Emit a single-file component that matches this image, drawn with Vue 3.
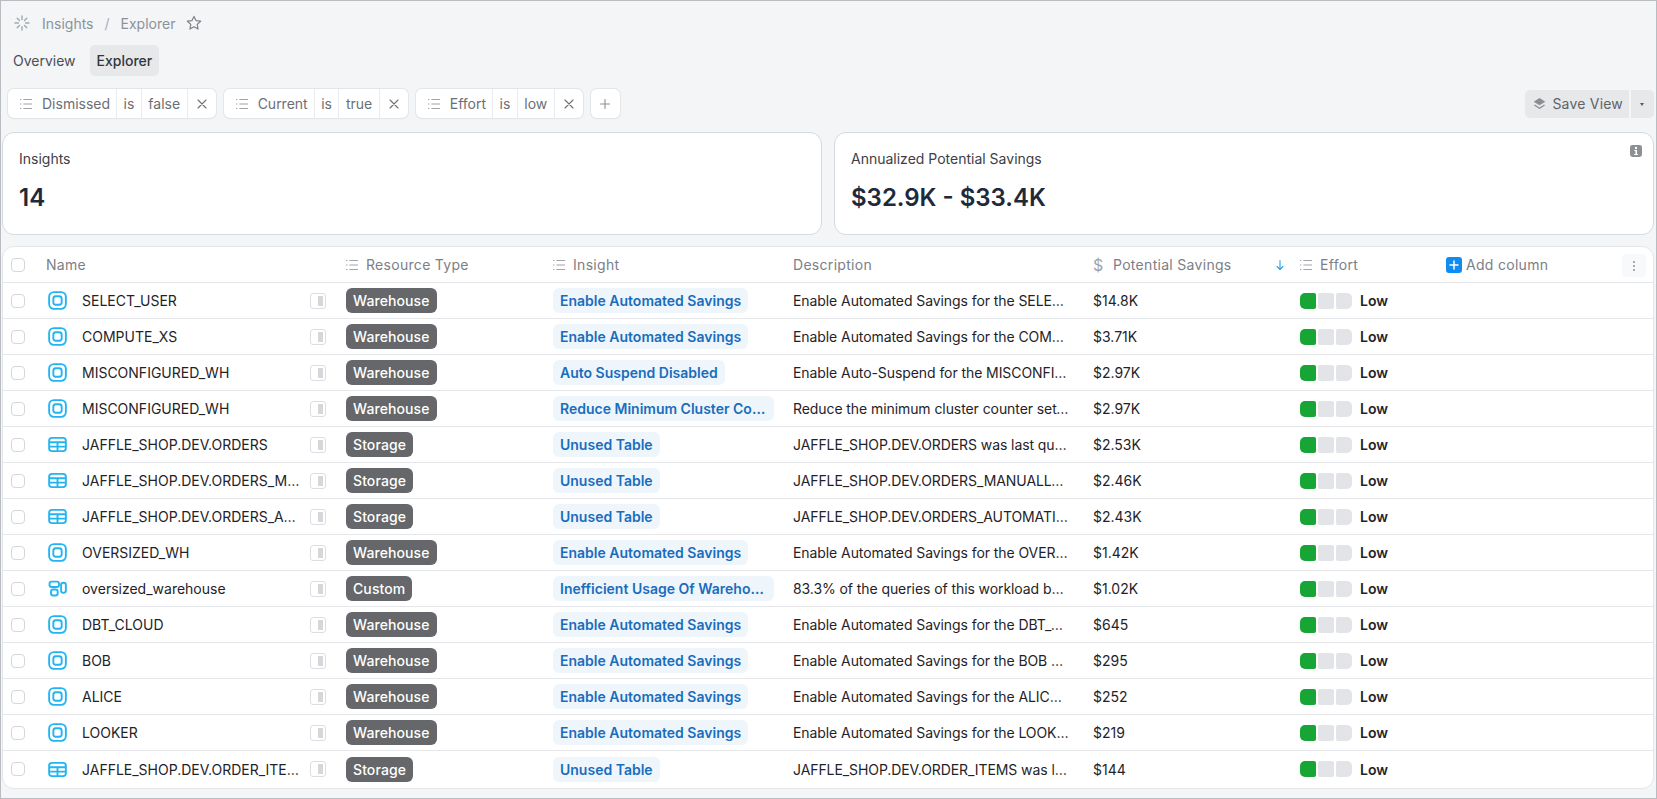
<script setup>
const filters = [
  { field: 'Dismissed', value: 'false' },
  { field: 'Current', value: 'true' },
  { field: 'Effort', value: 'low' },
]
const W = 'Warehouse'
const S = 'Storage'
const E = 'Enable Automated Savings'
const U = 'Unused Table'
const rows = [
  ['wh', 'SELECT_USER', W, E, 'Enable Automated Savings for the SELECT_USER warehouse', '$14.8K'],
  ['wh', 'COMPUTE_XS', W, E, 'Enable Automated Savings for the COMPUTE_XS warehouse', '$3.71K'],
  ['wh', 'MISCONFIGURED_WH', W, 'Auto Suspend Disabled', 'Enable Auto-Suspend for the MISCONFIGURED_WH warehouse', '$2.97K'],
  ['wh', 'MISCONFIGURED_WH', W, 'Reduce Minimum Cluster Count', 'Reduce the minimum cluster counter setting for this warehouse', '$2.97K'],
  ['tb', 'JAFFLE_SHOP.DEV.ORDERS', S, U, 'JAFFLE_SHOP.DEV.ORDERS was last queried long ago', '$2.53K'],
  ['tb', 'JAFFLE_SHOP.DEV.ORDERS_MANUALLY', S, U, 'JAFFLE_SHOP.DEV.ORDERS_MANUALLY was last queried long ago', '$2.46K'],
  ['tb', 'JAFFLE_SHOP.DEV.ORDERS_AUTOMATIC', S, U, 'JAFFLE_SHOP.DEV.ORDERS_AUTOMATIC was last queried', '$2.43K'],
  ['wh', 'OVERSIZED_WH', W, E, 'Enable Automated Savings for the OVERSIZED_WH warehouse', '$1.42K'],
  ['cu', 'oversized_warehouse', 'Custom', 'Inefficient Usage Of Warehouse Size', '83.3% of the queries of this workload benefit little', '$1.02K'],
  ['wh', 'DBT_CLOUD', W, E, 'Enable Automated Savings for the DBT_CLOUD warehouse', '$645'],
  ['wh', 'BOB', W, E, 'Enable Automated Savings for the BOB warehouse now', '$295'],
  ['wh', 'ALICE', W, E, 'Enable Automated Savings for the ALICE warehouse', '$252'],
  ['wh', 'LOOKER', W, E, 'Enable Automated Savings for the LOOKER warehouse', '$219'],
  ['tb', 'JAFFLE_SHOP.DEV.ORDER_ITEMS', S, U, 'JAFFLE_SHOP.DEV.ORDER_ITEMS was last queried long ago', '$144'],
].map(([icon, name, type, insight, description, savings]) => ({ icon, name, type, insight, description, savings }))
</script>

<template>
  <div class="page">
    <div class="crumbs">
      <svg class="spin" viewBox="0 0 16 16" fill="none" stroke="#a3a8af" stroke-width="1.4" stroke-linecap="round">
        <path d="M8 1v3.4M8 11.6V15M1 8h3.4M11.6 8H15M3.2 3.2l2.3 2.3M10.5 10.5l2.3 2.3M3.2 12.8l2.3-2.3M10.5 5.5l2.3-2.3" />
      </svg>
      <span>Insights</span>
      <span class="slash">/</span>
      <span>Explorer</span>
      <svg class="star" viewBox="0 0 16 16" fill="none" stroke="#7d8288" stroke-width="1.2" stroke-linejoin="round">
        <path d="M8 1.4l2 4.2 4.6.6-3.4 3.2.9 4.6L8 11.7 3.9 14l.9-4.6-3.4-3.2 4.6-.6z" />
      </svg>
    </div>
    <div class="tabs">
      <span class="tab">Overview</span>
      <span class="tab active">Explorer</span>
    </div>
    <div class="toolbar">
      <div v-for="f in filters" :key="f.field" class="filter">
        <span class="seg field">
          <svg class="list" viewBox="0 0 14 14" fill="none" stroke="#a0a5ab" stroke-width="1.1">
            <path d="M1 2.5h1.4M1 7h1.4M1 11.5h1.4M4.4 2.5H13M4.4 7H13M4.4 11.5H13" />
          </svg>
          {{ f.field }}
        </span>
        <span class="seg">is</span>
        <span class="seg">{{ f.value }}</span>
        <span class="seg close">
          <svg viewBox="0 0 10 10" fill="none" stroke="#6c7076" stroke-width="1.1" stroke-linecap="round"><path d="M1 1l8 8M9 1l-8 8" /></svg>
        </span>
      </div>
      <button class="add-filter">
        <svg viewBox="0 0 10 10" fill="none" stroke="#8b9096" stroke-width="1.1" stroke-linecap="round"><path d="M5 .5v9M.5 5h9" /></svg>
      </button>
      <div class="save">
        <span class="save-main">
          <svg viewBox="0 0 14 14"><path d="M7 1L13.2 5 7 9 .8 5z" fill="#8a8d91" /><path d="M1.5 8.6L7 12.2l5.5-3.6" fill="none" stroke="#8a8d91" stroke-width="1.4" /></svg>
          Save View
        </span>
        <span class="save-caret"></span>
      </div>
    </div>
    <div class="cards">
      <div class="card first">
        <div class="card-label">Insights</div>
        <div class="card-value">14</div>
      </div>
      <div class="card">
        <div class="card-label">Annualized Potential Savings</div>
        <div class="card-value">$32.9K - $33.4K</div>
        <svg class="info" viewBox="0 0 12 12">
          <rect width="12" height="12" rx="2.4" fill="#8c8f93" />
          <circle cx="6" cy="3" r="1.2" fill="#fff" />
          <path d="M4.3 5.1H7v4h1v1H4.2V9h1.2V6.1H4.3z" fill="#fff" />
        </svg>
      </div>
    </div>
    <div class="table">
      <div class="row head">
        <div class="cell center"><span class="check"></span></div>
        <div class="cell name-head">Name</div>
        <div class="cell type-head">
          <svg class="list" viewBox="0 0 14 14" fill="none" stroke="#a0a5ab" stroke-width="1.1"><path d="M1 2.5h1.4M1 7h1.4M1 11.5h1.4M4.4 2.5H13M4.4 7H13M4.4 11.5H13" /></svg>
          Resource Type
        </div>
        <div class="cell type-head">
          <svg class="list" viewBox="0 0 14 14" fill="none" stroke="#a0a5ab" stroke-width="1.1"><path d="M1 2.5h1.4M1 7h1.4M1 11.5h1.4M4.4 2.5H13M4.4 7H13M4.4 11.5H13" /></svg>
          Insight
        </div>
        <div class="cell">Description</div>
        <div class="cell savings-head">
          <span class="dollar">$</span>
          Potential Savings
          <svg class="arrow" viewBox="0 0 10 12" fill="none" stroke="#2ba3e6" stroke-width="1.1" stroke-linecap="round" stroke-linejoin="round"><path d="M5 1.5v9M2 7.5l3 3 3-3" /></svg>
        </div>
        <div class="cell type-head">
          <svg class="list" viewBox="0 0 14 14" fill="none" stroke="#a0a5ab" stroke-width="1.1"><path d="M1 2.5h1.4M1 7h1.4M1 11.5h1.4M4.4 2.5H13M4.4 7H13M4.4 11.5H13" /></svg>
          Effort
        </div>
        <div class="cell add-col">
          <span class="add-box"><svg viewBox="0 0 10 10" fill="none" stroke="#fff" stroke-width="1.5" stroke-linecap="round"><path d="M5 1v8M1 5h8" /></svg></span>
          Add column
          <span class="col-menu"><i></i><i></i><i></i></span>
        </div>
      </div>
      <div v-for="(r, i) in rows" :key="i" class="row body">
        <div class="cell center"><span class="check"></span></div>
        <div class="cell name">
          <svg v-if="r.icon === 'wh'" class="res" viewBox="0 0 20 20" fill="none" stroke="#22b5f2" stroke-width="2">
            <rect x="1.2" y="1.2" width="17.6" height="17.6" rx="5" />
            <rect x="5.6" y="5.6" width="8.8" height="8.8" rx="2.6" />
          </svg>
          <svg v-else-if="r.icon === 'tb'" class="res" viewBox="0 0 20 20" fill="none" stroke="#22b5f2" stroke-width="2">
            <rect x="1.2" y="3" width="17.6" height="14" rx="3" />
            <path d="M1.2 7.6h17.6M1.2 12.2h17.6M10 7.6V17" />
          </svg>
          <svg v-else class="res" viewBox="0 0 20 20" fill="none" stroke="#22b5f2" stroke-width="2">
            <rect x="1.6" y="2.8" width="10" height="5.6" rx="2.2" />
            <rect x="3.2" y="11" width="7" height="6.4" rx="2.2" />
            <rect x="13.8" y="4" width="5" height="10.6" rx="2.4" />
          </svg>
          <span class="name-text">{{ r.name }}</span>
          <span class="panel"><i></i></span>
        </div>
        <div class="cell"><span class="badge">{{ r.type }}</span></div>
        <div class="cell"><span class="pill">{{ r.insight }}</span></div>
        <div class="cell"><span class="desc">{{ r.description }}</span></div>
        <div class="cell">{{ r.savings }}</div>
        <div class="cell effort">
          <span class="bars"><i class="on"></i><i></i><i></i></span>
          <b>Low</b>
        </div>
        <div class="cell"></div>
      </div>
    </div>
  </div>
</template>

<style>
html, body { margin: 0; }
</style>

<style scoped>
.page {
  box-sizing: border-box;
  width: 1657px;
  height: 799px;
  overflow: hidden;
  background: #f3f5f7;
  border: 1px solid #b9bcc0;
  font-family: Inter, "Noto Sans", sans-serif;
  font-size: 14px;
  color: #1f2328;
  display: flex;
  flex-direction: column;
}
.crumbs {
  display: flex;
  align-items: center;
  height: 22px;
  margin-top: 11px;
  padding-left: 13px;
  color: #8d9298;
}
.spin { width: 16px; height: 16px; margin-right: 12px; }
.slash { margin: 0 11px; color: #a9adb2; }
.star { width: 16px; height: 16px; margin-left: 11px; }
.tabs {
  display: flex;
  align-items: center;
  gap: 7px;
  margin-top: 11px;
  padding-left: 5px;
  height: 31px;
}
.tab {
  padding: 0 7px;
  height: 31px;
  line-height: 31px;
  border-radius: 5px;
  color: #4b4f55;
}
.tab.active {
  background: #e6e8ea;
  color: #33373c;
  font-weight: 500;
}
.toolbar {
  display: flex;
  align-items: center;
  gap: 8px;
  margin-top: 13px;
  padding-left: 7px;
  padding-right: 2px;
  height: 29px;
}
.filter {
  display: flex;
  height: 29px;
  background: #fff;
  border-radius: 6px;
  box-shadow: 0 0 0 1px #e3e5e8, 0 1px 2px rgba(0, 0, 0, .05);
  color: #6a6f75;
}
.seg {
  display: flex;
  align-items: center;
  padding: 0 6.5px;
  border-left: 1px solid #e9ebed;
}
.seg.field { border-left: 0; padding: 0 6px 0 11px; gap: 9px; }
.seg.close { justify-content: center; padding: 0 9px; }
.seg.close svg { width: 10px; height: 10px; }
.list { width: 14px; height: 14px; flex: none; }
.add-filter {
  width: 29px;
  height: 29px;
  padding: 0;
  margin: 0;
  display: flex;
  align-items: center;
  justify-content: center;
  background: #fff;
  border: 0;
  border-radius: 6px;
  box-shadow: 0 0 0 1px #e3e5e8, 0 1px 2px rgba(0, 0, 0, .05);
}
.add-filter svg { width: 10px; height: 10px; }
.save {
  margin-left: auto;
  display: flex;
  gap: 2px;
  height: 28px;
  color: #5f6368;
}
.save-main {
  display: flex;
  align-items: center;
  gap: 6px;
  padding: 0 6px 0 8px;
  background: #e6e8ea;
  border-radius: 5px 0 0 5px;
  letter-spacing: .2px;
}
.save-main svg { width: 13px; height: 13px; }
.save-caret {
  position: relative;
  width: 23px;
  background: #e6e8ea;
  border-radius: 0 5px 5px 0;
}
.save-caret::after {
  content: "";
  position: absolute;
  left: 9px;
  top: 13px;
  border: 2.5px solid transparent;
  border-top: 3px solid #55595e;
  border-bottom: 0;
}
.cards {
  display: flex;
  gap: 12px;
  margin-top: 14px;
  padding: 0 2px 0 1px;
}
.card {
  position: relative;
  flex: 1;
  box-sizing: border-box;
  height: 103px;
  padding: 17px 16px;
  background: #fff;
  border: 1px solid #d6dade;
  border-radius: 12px;
}
.card-label { color: #3c4045; line-height: 18px; }
.card-value {
  margin-top: 15px;
  font-size: 24px;
  line-height: 30px;
  font-weight: 600;
  color: #1e293b;
}
.info {
  position: absolute;
  top: 12px;
  right: 11px;
  width: 12px;
  height: 12px;
}
.table {
  margin: 11px 2px 0 1px;
  padding-bottom: 1px;
  background: #fff;
  border: 1px solid #e4e6e9;
  border-radius: 12px;
  overflow: hidden;
}
.row {
  display: grid;
  grid-template-columns: 30px 304px 207px 240px 300px 207px 146px 1fr;
  height: 36px;
  box-sizing: border-box;
  border-bottom: 1px solid #e5e7ea;
}
.row:last-child { border-bottom: 0; }
.cell {
  display: flex;
  align-items: center;
  min-width: 0;
  padding-left: 9px;
  white-space: nowrap;
}
.center { justify-content: center; padding-left: 0; }
.head { color: #7b8087; letter-spacing: .3px; }
.name-head { padding-left: 13px; }
.type-head { gap: 7px; padding-left: 8px; }
.savings-head { position: relative; gap: 9px; }
.dollar { font-size: 16px; color: #9ea3a9; width: 11px; }
.arrow { position: absolute; left: 191px; top: 12px; width: 10px; height: 12px; }
.add-col { position: relative; gap: 4px; }
.add-box {
  width: 16px;
  height: 16px;
  background: #0f8cf0;
  border-radius: 3px;
  display: flex;
  align-items: center;
  justify-content: center;
}
.add-box svg { width: 10px; height: 10px; }
.col-menu {
  position: absolute;
  right: 7px;
  top: 7px;
  width: 24px;
  height: 23px;
  border-radius: 4px;
  background: #f8f9fa;
  display: flex;
  flex-direction: column;
  align-items: center;
  justify-content: center;
  gap: 2px;
}
.col-menu i { width: 2px; height: 2px; border-radius: 50%; background: #8c9096; }
.check {
  box-sizing: border-box;
  width: 14px;
  height: 14px;
  border: 1px solid #d4d6d9;
  border-radius: 4px;
  background: #fff;
}
.name { padding-left: 15px; }
.res { width: 19px; height: 19px; flex: none; }
.name-text {
  width: 218px;
  margin-left: 15px;
  overflow: hidden;
  text-overflow: ellipsis;
}
.panel {
  box-sizing: border-box;
  width: 16px;
  height: 16px;
  margin-left: 10px;
  border: 1px solid #dcdee1;
  border-radius: 3px;
  display: flex;
  justify-content: flex-end;
  padding: 2px;
}
.panel i { width: 5px; background: #d5d7da; }
.badge {
  height: 25px;
  line-height: 25px;
  padding: 0 7px;
  border-radius: 6px;
  background: #65676a;
  color: #fff;
  font-weight: 500;
  letter-spacing: .1px;
}
.pill {
  box-sizing: border-box;
  max-width: 221px;
  height: 25px;
  line-height: 25px;
  padding: 0 7px;
  border-radius: 6px;
  background: #eef6fc;
  color: #1a6dbd;
  font-weight: 600;
  overflow: hidden;
  text-overflow: ellipsis;
}
.desc {
  width: 277px;
  letter-spacing: -.08px;
  overflow: hidden;
  text-overflow: ellipsis;
}
.effort { gap: 8px; }
.bars { display: flex; gap: 2px; border-radius: 5px; overflow: hidden; }
.bars i { width: 16px; height: 16px; border-radius: 2px; background: #e2e4e7; }
.bars i.on { background: #17a535; }
.effort b { font-weight: 600; }
</style>
